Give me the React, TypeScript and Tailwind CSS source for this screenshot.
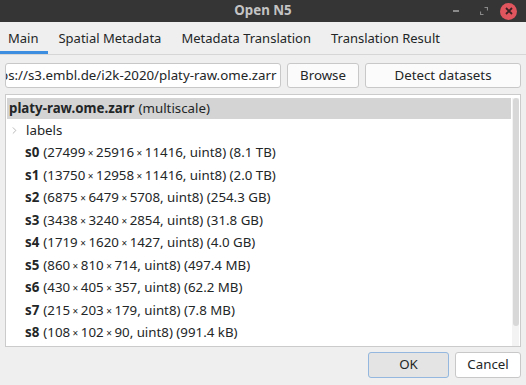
import { ChevronRight } from "lucide-react";

const scales = [
  ["s0", "27499×25916×11416", "8.1 TB"],
  ["s1", "13750×12958×11416", "2.0 TB"],
  ["s2", "6875×6479×5708", "254.3 GB"],
  ["s3", "3438×3240×2854", "31.8 GB"],
  ["s4", "1719×1620×1427", "4.0 GB"],
  ["s5", "860×810×714", "497.4 MB"],
  ["s6", "430×405×357", "62.2 MB"],
  ["s7", "215×203×179", "7.8 MB"],
  ["s8", "108×102×90", "991.4 kB"],
];

const tabs = ["Main", "Spatial Metadata", "Metadata Translation", "Translation Result"];

function Dims({ s }: { s: string }) {
  const parts = s.split("×");
  return (
    <>
      {parts.map((p, i) => (
        <span key={i}>
          {p}
          {i < parts.length - 1 && <span className="px-[2.5px] text-[10px]">×</span>}
        </span>
      ))}
    </>
  );
}

export default function App() {
  return (
    <div
      className="flex h-[385px] w-[526px] flex-col overflow-hidden bg-[#efefef] text-[13.3px] text-[#232627]"
      style={{ fontFamily: '"Noto Sans", "Open Sans", sans-serif' }}
    >
      {/* title bar */}
      <div className="relative flex h-[22px] items-center justify-center bg-[#353535]">
        <span className="font-bold text-[#c4c4c4]">Open N5</span>
        <div className="absolute right-[9px] top-0 flex h-full items-center">
          <span className="h-[2px] w-[6px] bg-[#8a8a8a]" />
          <svg width="8" height="8" viewBox="0 0 8 8" className="ml-[21px]">
            <path d="M4.5 0.5h3v3M3.5 7.5h-3v-3" fill="none" stroke="#8a8a8a" strokeWidth="1.2" />
          </svg>
          <span className="ml-[12px] flex h-[17px] w-[17px] items-center justify-center rounded-full bg-[#e0555e]">
            <svg width="8" height="8" viewBox="0 0 8 8">
              <path d="M1 1l6 6M7 1l-6 6" stroke="#3a2224" strokeWidth="1.8" />
            </svg>
          </span>
        </div>
      </div>

      {/* tabs */}
      <div className="flex h-[33px] border-b border-[#d6d6d6] text-[13px]">
        {tabs.map((t, i) => (
          <div
            key={t}
            className={
              "flex items-center px-[10px] pt-[5px] " +
              (i === 0 ? "border-b-[3px] border-[#3d8ee0] pl-[8px]" : "border-b-[3px] border-transparent")
            }
          >
            {t}
          </div>
        ))}
      </div>

      {/* url row */}
      <div className="mt-[8px] flex h-[25px] gap-[6px] pl-[5px] pr-[5px]">
        <div className="flex w-[276px] items-center overflow-hidden whitespace-nowrap rounded-[3px] border border-[#c8c8c8] bg-white">
          <span className="ml-[-6px]">ps://s3.embl.de/i2k-2020/platy-raw.ome.zarr</span>
        </div>
        <button className="w-[72px] rounded-[3px] border border-[#c8c8c8] bg-[#fbfbfb]">Browse</button>
        <button className="flex-1 rounded-[3px] border border-[#c8c8c8] bg-[#fbfbfb]">Detect datasets</button>
      </div>

      {/* tree */}
      <div className="mx-[5px] mt-[6px] flex h-[253px] border border-[#cbcbcb] bg-white px-[1px] pt-[3px]">
        <div className="flex-1">
          <div className="flex h-[21px] items-center bg-[#d4d4d4] pl-[2px]">
            <span className="font-bold">platy-raw.ome.zarr</span>
            <span className="ml-[4px]">(multiscale)</span>
          </div>
          <div className="flex h-[22.5px] items-center pl-[2px] pt-[1px]">
            <ChevronRight size={11} className="text-[#9a9a9a]" strokeWidth={1.5} />
            <span className="ml-[6px]">labels</span>
          </div>
          {scales.map(([n, d, sz]) => (
            <div key={n} className="flex h-[22.5px] items-center whitespace-nowrap pl-[18px] pt-[1px]">
              <span className="font-bold">{n}</span>
              <span className="ml-[4px]">
                (<Dims s={d} />, uint8) ({sz})
              </span>
            </div>
          ))}
        </div>
        <div className="ml-[1px] w-[7px] bg-[#f3f3f3]">
          <div className="mx-auto h-[228px] w-[6px] rounded-full bg-[#d8d8d8]" />
        </div>
      </div>

      {/* buttons */}
      <div className="mt-[5px] flex justify-end gap-[6px] pr-[5px]">
        <button className="h-[26px] w-[81px] rounded-[3px] border border-[#93b7de] bg-[#e4e4e4]">OK</button>
        <button className="h-[26px] w-[66px] rounded-[3px] border border-[#c8c8c8] bg-white">Cancel</button>
      </div>
    </div>
  );
}
